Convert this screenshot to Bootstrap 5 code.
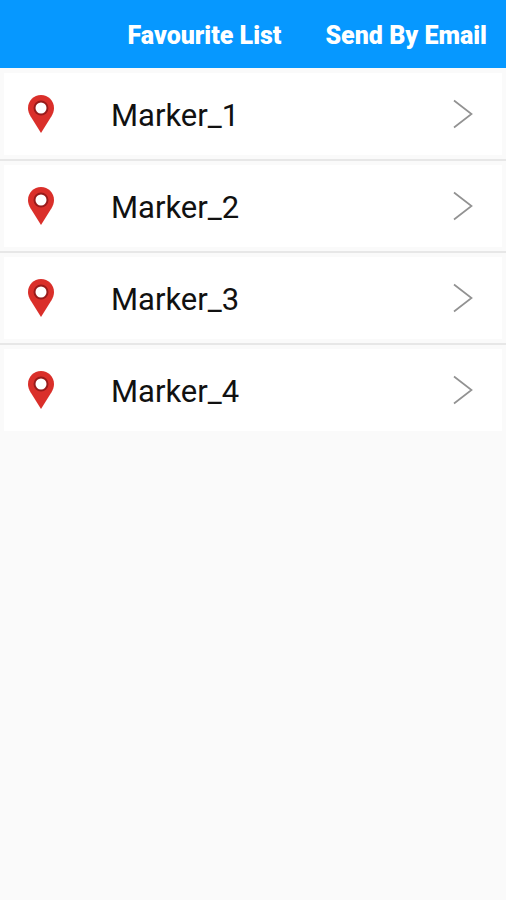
<!DOCTYPE html>
<html lang="en">
<head>
<meta charset="utf-8">
<meta name="viewport" content="width=device-width, initial-scale=1">
<title>Favourite List</title>
<link href="https://cdn.jsdelivr.net/npm/bootstrap@5.3.0/dist/css/bootstrap.min.css" rel="stylesheet">
<style>
body { background: #fafafa; font-family: Roboto, sans-serif; color: #111; }
.app-bar { background: #0698ff; height: 68px; gap: 44px; padding: 4px 19px 0; }
.app-bar h1, .mail-btn { font-size: 25px; line-height: 30px; font-weight: 900; color: #fff; }
.marker-list { padding-top: 1px; }
.marker-item { border-bottom: 2px solid #e7e7e7; padding: 4px; }
.marker-item:last-child { border-bottom: 0; }
.marker-link { background: #fff; min-height: 82px; padding: 0 29px 0 24px; color: #111; font-size: 31px; line-height: 36px; }
.marker-name { margin-left: 57px; padding-top: 3px; }
</style>
</head>
<body>
<svg class="d-none" aria-hidden="true">
  <symbol id="pin" viewBox="0 0 26 38">
    <path d="M13 0C5.800 0 0 5.800 0 13c0 3 1 5.500 2.500 8.200L13 38l10.500-16.800C25 18.500 26 16 26 13 26 5.800 20.200 0 13 0z" fill="#da2f2a"/>
    <circle cx="13" cy="13" r="7.500" fill="#981b1b"/>
    <circle cx="13" cy="13" r="5.500" fill="#fff"/>
  </symbol>
  <symbol id="chevron" viewBox="0 0 20 30">
    <path d="M1 1.500L18.500 15 1 28.500" fill="none" stroke="#929292" stroke-width="1.700"/>
  </symbol>
</svg>
<header class="app-bar d-flex align-items-center justify-content-end">
  <h1 class="m-0">Favourite List</h1>
  <button type="button" class="mail-btn btn p-0 border-0">Send By Email</button>
</header>
<main>
  <ul class="marker-list list-unstyled m-0">
    <li class="marker-item"><a href="#marker-1" class="marker-link d-flex align-items-center text-decoration-none"><svg width="26" height="38" aria-hidden="true"><use href="#pin"/></svg><span class="marker-name flex-grow-1">Marker_1</span><svg width="20" height="30" aria-hidden="true"><use href="#chevron"/></svg></a></li>
    <li class="marker-item"><a href="#marker-2" class="marker-link d-flex align-items-center text-decoration-none"><svg width="26" height="38" aria-hidden="true"><use href="#pin"/></svg><span class="marker-name flex-grow-1">Marker_2</span><svg width="20" height="30" aria-hidden="true"><use href="#chevron"/></svg></a></li>
    <li class="marker-item"><a href="#marker-3" class="marker-link d-flex align-items-center text-decoration-none"><svg width="26" height="38" aria-hidden="true"><use href="#pin"/></svg><span class="marker-name flex-grow-1">Marker_3</span><svg width="20" height="30" aria-hidden="true"><use href="#chevron"/></svg></a></li>
    <li class="marker-item"><a href="#marker-4" class="marker-link d-flex align-items-center text-decoration-none"><svg width="26" height="38" aria-hidden="true"><use href="#pin"/></svg><span class="marker-name flex-grow-1">Marker_4</span><svg width="20" height="30" aria-hidden="true"><use href="#chevron"/></svg></a></li>
  </ul>
</main>
<script src="https://cdn.jsdelivr.net/npm/bootstrap@5.3.0/dist/js/bootstrap.bundle.min.js"></script>
</body>
</html>
